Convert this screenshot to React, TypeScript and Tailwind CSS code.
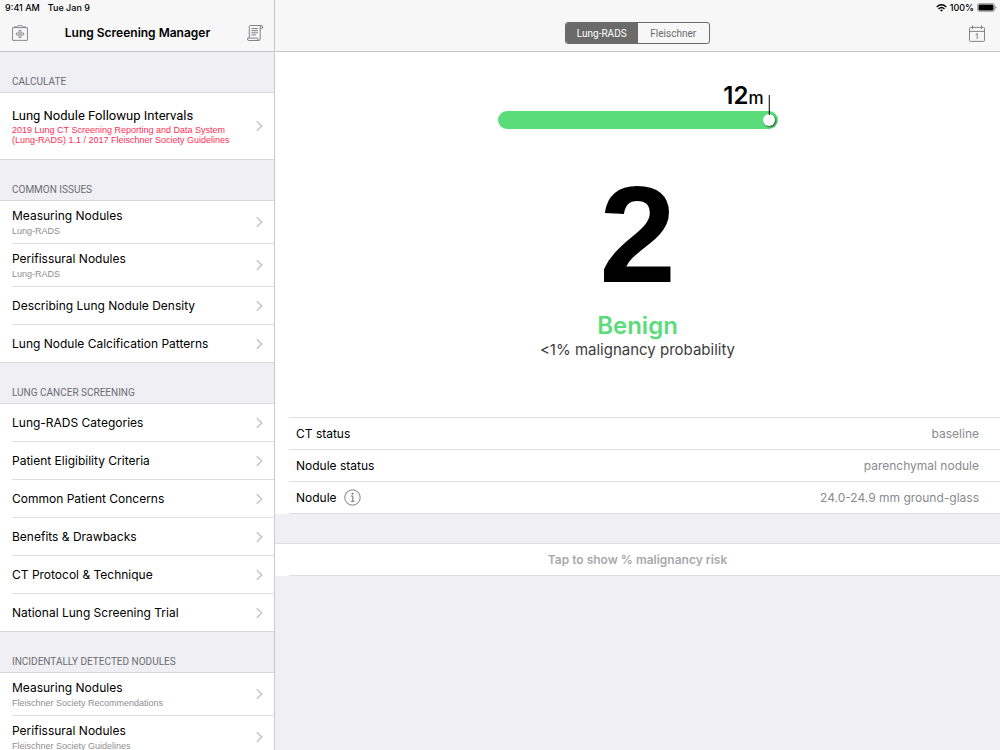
import { useState } from "react";

type Item = { title: string; note?: string };
type Section = { heading: string; items: Item[] };

const sections: Section[] = [
  {
    heading: "Common Issues",
    items: [
      { title: "Measuring Nodules", note: "Lung-RADS" },
      { title: "Perifissural Nodules", note: "Lung-RADS" },
      { title: "Describing Lung Nodule Density" },
      { title: "Lung Nodule Calcification Patterns" },
    ],
  },
  {
    heading: "Lung Cancer Screening",
    items: [
      { title: "Lung-RADS Categories" },
      { title: "Patient Eligibility Criteria" },
      { title: "Common Patient Concerns" },
      { title: "Benefits & Drawbacks" },
      { title: "CT Protocol & Technique" },
      { title: "National Lung Screening Trial" },
    ],
  },
  {
    heading: "Incidentally Detected Nodules",
    items: [
      { title: "Measuring Nodules", note: "Fleischner Society Recommendations" },
      { title: "Perifissural Nodules", note: "Fleischner Society Guidelines" },
    ],
  },
];

function Chevron() {
  return (
    <svg className="shrink-0" width="7" height="12" viewBox="0 0 7 12" fill="none" stroke="#c4c4c9" strokeWidth="1.5" aria-hidden="true">
      <path d="M0.8 1.2 5.7 6 0.8 10.8" />
    </svg>
  );
}

function KitIcon() {
  return (
    <svg width="16" height="16" viewBox="0 0 16 16" fill="none" stroke="#7d7d80" strokeWidth="0.9" aria-hidden="true">
      <rect x="0.5" y="2.6" width="15" height="12.8" rx="0.4" />
      <path d="M5.3 2.5V1.6Q5.3 0.6 6.3 0.6H9.7Q10.7 0.6 10.7 1.6V2.5" />
      <path d="M2.6 2.5V1.7H4.2V2.5M11.8 2.5V1.7H13.4V2.5" strokeWidth="0.7" />
      <path d="M7 5.4H9V8H11.6V10H9V12.6H7V10H4.4V8H7Z" strokeWidth="0.8" />
      <path d="M8 7.5V10.5M6.5 9H9.5" strokeWidth="0.7" />
    </svg>
  );
}

function ScrollIcon() {
  return (
    <svg width="16" height="16" viewBox="0 0 16 16" fill="none" stroke="#77777a" strokeWidth="0.9" aria-hidden="true">
      <path d="M2.3 13V1.6Q2.3 0.5 3.4 0.5H14.2Q15.5 0.5 15.5 2V3.2H13.2" />
      <path d="M14.2 0.5Q13.2 0.7 13.2 2V14Q13.2 15.4 11.9 15.5Q10.8 15.4 10.8 14V13.1H0.5V14.1Q0.5 15.5 1.9 15.5H11.9" />
      <path d="M4.4 3.6H11M4.4 5.7H11M4.4 7.8H11M4.4 9.9H8.8" />
    </svg>
  );
}

function CalendarIcon() {
  return (
    <svg width="16" height="17" viewBox="0 0 16 17" fill="none" stroke="#77777a" strokeWidth="0.9" aria-hidden="true">
      <rect x="0.5" y="2.4" width="15" height="14" rx="1" />
      <path d="M0.5 6.4H15.5M3.5 0.4V4M12.5 0.4V4" />
      <path d="M6.7 9.5 8.2 8.5V14" />
    </svg>
  );
}

function WifiIcon() {
  return (
    <svg width="11" height="8" viewBox="0 0 11 8" fill="none" stroke="#000" strokeWidth="1.4" aria-hidden="true">
      <path d="M0.7 3Q5.5 -1.5 10.3 3" />
      <path d="M2.5 4.9Q5.5 2.1 8.5 4.9" />
      <path d="M4 6.1Q5.5 4.9 7 6.1L5.5 7.7Z" fill="#000" stroke="none" />
    </svg>
  );
}

function BatteryIcon() {
  return (
    <svg width="20" height="9" viewBox="0 0 20 9" aria-hidden="true">
      <rect x="0.4" y="0.4" width="17.2" height="8.2" rx="2.3" fill="none" stroke="#8a8a8a" strokeWidth="0.8" />
      <rect x="1.5" y="1.5" width="15" height="6" rx="1.3" fill="#000" />
      <path d="M18.4 3V6Q19.5 5.6 19.5 4.5T18.4 3Z" fill="#8a8a8a" />
    </svg>
  );
}

function InfoIcon() {
  return (
    <svg width="17" height="17" viewBox="0 0 17 17" fill="none" stroke="#6d6d70" aria-hidden="true">
      <circle cx="8.5" cy="8.5" r="7.7" strokeWidth="0.9" />
      <path d="M7 7H8.8V12.2M6.8 12.3H10.5" strokeWidth="1" />
      <circle cx="8.5" cy="4.7" r="0.9" fill="#6d6d70" stroke="none" />
    </svg>
  );
}

function SectionHeading({ children }: { children: string }) {
  return (
    <h2 className="flex h-[41px] items-end border-b border-[#d9d9dd] px-3 pb-[3px] font-[Roboto,sans-serif] text-[10px] leading-[14px] text-[#6d6d72] uppercase">
      {children}
    </h2>
  );
}

function SidebarRow({ item, last }: { item: Item; last: boolean }) {
  return (
    <li className={last ? "bg-white" : "bg-white pl-3"}>
      <a
        href="#"
        className={
          "flex items-center justify-between border-b pr-[11px] " +
          (item.note ? "h-[43px] " : "h-[38px] ") +
          (last ? "border-[#d9d9dd] pl-3" : "border-[#dedee1]")
        }
      >
        <span className="flex flex-col">
          <span className="text-[12px] leading-4">{item.title}</span>
          {item.note && (
            <span className="pt-px font-['Liberation_Sans',sans-serif] text-[9px] leading-3 text-[#8e8e93]">{item.note}</span>
          )}
        </span>
        <Chevron />
      </a>
    </li>
  );
}

function Sidebar() {
  return (
    <aside className="flex w-[275px] shrink-0 flex-col overflow-hidden border-r border-[#c9c9cd] bg-[#efeff4]">
      <header className="flex h-[52px] shrink-0 flex-col border-b border-[#c5c5c9] bg-[#f7f7f8]">
        <div className="flex h-[15px] items-center gap-2 px-[5px] text-[9px] font-medium">
          <span>9:41 AM</span>
          <span>Tue Jan 9</span>
        </div>
        <div className="flex grow items-center justify-between pr-[11px] pl-3">
          <button type="button" aria-label="Clinical tools">
            <KitIcon />
          </button>
          <h1 className="text-[12px] font-semibold">Lung Screening Manager</h1>
          <button type="button" aria-label="References">
            <ScrollIcon />
          </button>
        </div>
      </header>
      <nav className="min-h-0 grow overflow-hidden">
        <SectionHeading>Calculate</SectionHeading>
        <a href="#" className="flex h-[67px] items-center justify-between border-b border-[#d9d9dd] bg-white pr-[11px] pl-3">
          <span className="flex flex-col">
            <span className="font-[Roboto,sans-serif] text-[13px] leading-[18px]">Lung Nodule Followup Intervals</span>
            <span className="font-['Liberation_Sans',sans-serif] text-[9px] leading-[10px] text-[#ff2d55]">
              2019 Lung CT Screening Reporting and Data System
              <br />
              (Lung-RADS) 1.1 / 2017 Fleischner Society Guidelines
            </span>
          </span>
          <Chevron />
        </a>
        {sections.map((section) => (
          <section key={section.heading}>
            <SectionHeading>{section.heading}</SectionHeading>
            <ul>
              {section.items.map((item, i) => (
                <SidebarRow key={item.title} item={item} last={i === section.items.length - 1} />
              ))}
            </ul>
          </section>
        ))}
      </nav>
    </aside>
  );
}

function FollowupSlider() {
  const [months, setMonths] = useState(12);
  const ratio = months / 12;
  return (
    <div className="relative w-[280px] pt-[59px]">
      <input
        id="followup"
        type="range"
        min={0}
        max={12}
        value={months}
        onChange={(e) => setMonths(Number(e.target.value))}
        className="block h-[18px] w-full appearance-none rounded-full bg-[#5bdc7a] px-[3px] [&::-webkit-slider-thumb]:size-3 [&::-webkit-slider-thumb]:appearance-none [&::-webkit-slider-thumb]:rounded-full [&::-webkit-slider-thumb]:bg-white [&::-webkit-slider-thumb]:shadow-[1px_1px_2px_rgba(0,0,0,0.6)]"
      />
      <label
        htmlFor="followup"
        className="absolute top-7 flex -translate-x-full items-baseline pr-[6px]"
        style={{ left: `calc(9px + ${ratio} * (100% - 17px))` }}
      >
        <span className="text-[24px] leading-8 font-semibold">{months}</span>
        <span className="text-[17px] leading-8 font-medium">m</span>
        <span className="absolute top-[15px] right-0 h-5 w-px bg-black" />
      </label>
    </div>
  );
}

function DetailRow({ label, value, info }: { label: string; value: string; info?: boolean }) {
  return (
    <div className="flex h-8 items-center justify-between border-b border-[#dedee1] pr-[21px] pl-[7px] text-[12px]">
      <dt className="flex items-center gap-[7px]">
        {label}
        {info && (
          <button type="button" aria-label="About nodule">
            <InfoIcon />
          </button>
        )}
      </dt>
      <dd className="text-[#8a8a8e]">{value}</dd>
    </div>
  );
}

export default function App() {
  const [system, setSystem] = useState("Lung-RADS");
  return (
    <div className="flex h-screen overflow-hidden bg-[#efeff4] font-[Inter,sans-serif] text-black">
      <Sidebar />
      <main className="flex min-w-0 grow flex-col">
        <header className="flex h-[52px] shrink-0 flex-col border-b border-[#c5c5c9] bg-[#f7f7f8]">
          <div className="flex h-[15px] items-center justify-end gap-[3px] pr-[3px] text-[9px] font-medium">
            <WifiIcon />
            <span>100%</span>
            <BatteryIcon />
          </div>
          <div className="grid grow grid-cols-[1fr_auto_1fr] items-center px-[15px]">
            <div className="col-start-2 flex h-[22px] w-[145px] overflow-hidden rounded-[3px] border border-[#6a6a6a] font-[Roboto,sans-serif] text-[10px]">
              {["Lung-RADS", "Fleischner"].map((name) => (
                <button
                  key={name}
                  type="button"
                  aria-pressed={system === name}
                  onClick={() => setSystem(name)}
                  className={system === name ? "flex-1 bg-[#6a6a6a] text-white" : "flex-1 text-[#6a6a6a]"}
                >
                  {name}
                </button>
              ))}
            </div>
            <button type="button" aria-label="Schedule" className="justify-self-end">
              <CalendarIcon />
            </button>
          </div>
        </header>

        <section className="flex h-[365px] shrink-0 flex-col items-center bg-white">
          <FollowupSlider />
          <p className="pt-[26px] font-['Liberation_Sans',sans-serif] text-[138px] leading-[158px] font-bold">2</p>
          <p className="text-[24px] leading-[26px] font-semibold text-[#5bdc7a]">Benign</p>
          <p className="text-[15px] leading-[22px] text-[#3c3c3e]">&lt;1% malignancy probability</p>
        </section>

        <div className="bg-white pl-[14px]">
          <dl className="border-t border-[#dedee1]">
            <DetailRow label="CT status" value="baseline" />
            <DetailRow label="Nodule status" value="parenchymal nodule" />
            <DetailRow label="Nodule" value="24.0-24.9 mm ground-glass" info />
          </dl>
        </div>

        <div className="mt-[29px] border-t border-[#dedee1] bg-white pl-[14px]">
          <button
            type="button"
            className="block h-8 w-full border-b border-[#dedee1] pr-[14px] text-[12px] font-semibold text-[#a9a9ad]"
          >
            Tap to show % malignancy risk
          </button>
        </div>
      </main>
    </div>
  );
}
